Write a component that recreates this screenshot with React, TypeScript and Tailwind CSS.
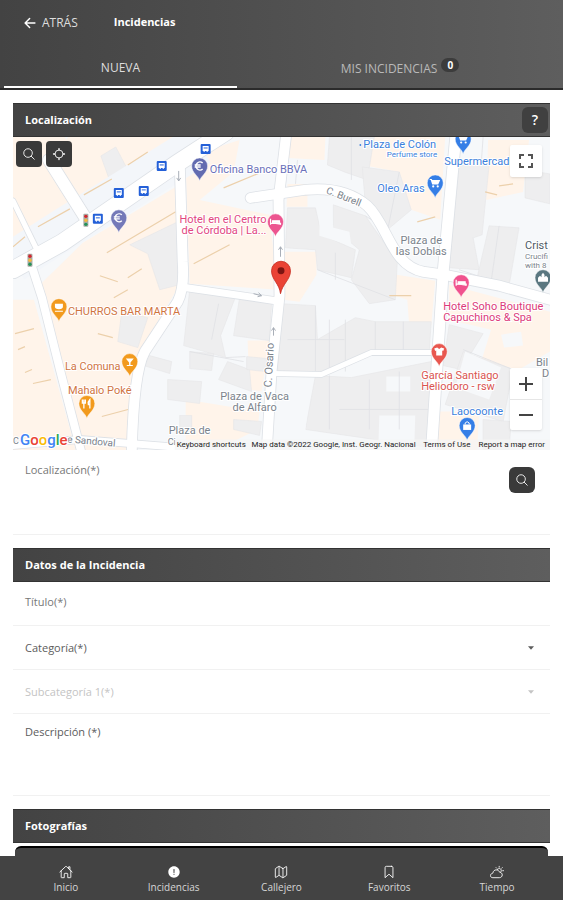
import type { ReactNode } from "react";
import {
  IoAlertCircle,
  IoArrowBack,
  IoBookmarkOutline,
  IoCaretDownSharp,
  IoHomeOutline,
  IoLocateOutline,
  IoMapOutline,
  IoPartlySunnyOutline,
  IoSearchOutline,
} from "react-icons/io5";

const navItems = [
  { label: "Inicio", icon: IoHomeOutline },
  { label: "Incidencias", icon: IoAlertCircle },
  { label: "Callejero", icon: IoMapOutline },
  { label: "Favoritos", icon: IoBookmarkOutline },
  { label: "Tiempo", icon: IoPartlySunnyOutline },
];

/* ---------- Map data ---------- */

// Commercial areas (beige)
const areas = [
  "13,137 65,137 92,187 83,214 38,227 13,240",
  "68,137 180,137 178,142 84,195 60,152",
  "83,243 176,187 180,285 140,352 128,451 82,451 52,340 40,285",
  "13,300 34,300 76,451 13,451",
  "186,165 215,148 240,140 234,172 200,200 270,215 278,290 190,284",
  "290,137 326,137 325,160 288,158",
  "288,184 308,184 308,207 287,207",
  "284,252 317,252 317,275 300,302 284,300",
  "363,137 446,137 441,220 412,210 400,172 363,165",
  "489,140 530,140 524,192 487,200",
  "378,272 436,281 432,326 410,326 408,300 378,290",
  "450,285 551,312 551,352 520,370 482,362 492,330 450,320",
  "248,341 270,341 262,392 250,390",
  "186,400 260,412 258,430 222,448 186,440",
  "440,412 480,412 478,451 438,451",
];

// Buildings (grey)
const buildings = [
  "101,156 116,147 128,170 110,181",
  "130,245 178,222 180,285 160,290 148,254",
  "122,312 148,318 138,348 118,342",
  "146,355 172,362 170,374 144,366",
  "190,290 236,297 221,336 226,358 184,346",
  "240,298 272,304 270,341 234,336",
  "190,352 214,354 212,371 190,369",
  "228,362 250,370 252,392 219,380",
  "168,380 202,382 200,404 168,400",
  "247,357 268,359 266,372 247,370",
  "234,420 262,422 260,436 234,430",
  "180,416 192,416 192,432 180,432",
  "330,137 375,137 368,180 345,172 328,165",
  "288,208 316,208 322,235 356,250 352,278 318,270 316,250 286,248",
  "334,205 366,216 398,262 396,300 370,304 352,280 360,250 334,228",
  "363,167 400,172 412,210 388,230 366,205",
  "460,165 490,165 483,235 474,238 480,270 450,268",
  "490,226 520,228 510,286 478,278",
  "526,170 551,174 551,204 526,198",
  "282,304 316,306 318,340 356,318 376,322 432,322 430,352 370,352 325,374 278,371",
  "316,376 352,378 432,362 430,448 306,430",
  "450,325 484,334 462,370 444,366",
  "464,352 514,370 504,422 446,405",
  "484,420 512,422 510,451 484,451",
];

// Courtyards cut into the buildings
const courtyards = [
  "320,212 332,212 334,228 350,232 352,246 320,236",
  "387,377 411,377 411,392 387,392",
  "380,416 416,416 415,448 379,448",
  "502,335 522,332 524,346 505,348",
  "466,352 502,368 490,400 456,388",
  "275,376 312,378 306,430 318,448 268,448",
];

// Thin plot outlines
const plotLines = [
  "M316,306V372 M330,320V372 M346,320V372 M376,322V352 M404,322V352 M288,340H345 M370,380V430",
  "M366,216L388,230 M400,172L388,232 M340,410H432 M484,137L482,165 M500,226L492,282",
  "M190,352L244,362 M246,357L226,358 M219,304L212,340 M352,137V180 M298,160L296,184",
  "M318,270L396,300 M336,253V280 M460,270L551,300 M464,350L514,370 M330,376V430 M400,372V430",
];

const plotAccents =
  "M84,195L112,179 M38,227L70,209 M128,165L148,152 M107,253L176,212 M224,188L260,173 M194,264L230,245 M100,276L118,282 M128,278L142,269 M114,298L128,290 M13,247L25,237 M15,334L34,329 M98,334L113,338 M33,384L51,380 M102,417L132,409 M25,373L32,370 M18,350L25,347 M418,222L436,217 M500,186L514,184 M486,192L498,195 M390,296H412";

const roads = [
  { d: "M49,160L88,222", w: 12 },
  { d: "M13,201L38,252", w: 5 },
  { d: "M13,270L62,243L178,163L226,132", w: 17 },
  { d: "M31,264L42,298L60,370L81,451", w: 8 },
  { d: "M180,162L183,262Q185,288 178,302L145,352Q134,372 132,451", w: 10 },
  { d: "M187,288L276,301", w: 7 },
  { d: "M251,198L305,190Q345,186 368,206C388,224 392,266 424,272L445,275L500,286L551,300", w: 10 },
  { d: "M287,132L279,200L280,296L272,372L267,455", w: 10 },
  { d: "M274,374L322,375L372,353H436", w: 5 },
  { d: "M457,132L444,272L432,455", w: 11 },
  { d: "M13,446L80,440L180,448", w: 7 },
];

const places = [
  { lines: ["Oficina Banco BBVA"], x: 210, y: 173, color: "#6a71ba" },
  { lines: ["Hotel en el Centro", "de Córdoba | La..."], x: 179, y: 223, color: "#e2467f", end: 267 },
  { lines: ["CHURROS BAR MARTA"], x: 68, y: 315, color: "#d0743f" },
  { lines: ["La Comuna"], x: 65, y: 370, color: "#d0743f" },
  { lines: ["Mahalo Poké"], x: 68, y: 394, color: "#d0743f" },
  { lines: ["Oleo Aras"], x: 378, y: 192, color: "#3d7fdc" },
  { lines: ["Plaza de Colón"], x: 364, y: 148, color: "#3d7fdc" },
  { lines: ["Supermercad"], x: 445, y: 165, color: "#3d7fdc" },
  { lines: ["Hotel Soho Boutique", "Capuchinos & Spa"], x: 444, y: 310, color: "#dc3b7a" },
  { lines: ["García Santiago", "Heliodoro - rsw"], x: 422, y: 379, color: "#d95450" },
  { lines: ["Laocoonte"], x: 452, y: 416, color: "#3d7fdc" },
];

const pins = [
  { x: 200, y: 181, color: "#626bb0", kind: "euro" },
  { x: 119, y: 233, color: "#7479b8", kind: "euro" },
  { x: 276, y: 237, color: "#ec5590", kind: "bed" },
  { x: 462, y: 298, color: "#f0528e", kind: "bed" },
  { x: 59, y: 322, color: "#f29a1d", kind: "cup" },
  { x: 130, y: 377, color: "#f29a1d", kind: "glass" },
  { x: 87, y: 419, color: "#f29a1d", kind: "fork" },
  { x: 436, y: 198, color: "#357ee6", kind: "cart" },
  { x: 464, y: 154, color: "#357ee6", kind: "cart" },
  { x: 440, y: 367, color: "#e8574f", kind: "shop" },
  { x: 468, y: 441, color: "#357ee6", kind: "bag" },
  { x: 544, y: 293, color: "#5a7780", kind: "church" },
];

const busStops = [
  [206, 149],
  [162, 166],
  [119, 193],
  [144, 191],
  [98, 219],
];

const pinGlyphs: Record<string, ReactNode> = {
  euro: <path d="M3,-18A4,4 0 1 0 3,-12M-5,-16H1M-5,-14H1" fill="none" stroke="#fff" strokeWidth="1.4" />,
  bed: <path d="M-5,-18V-12M-5,-13.500H5V-12M-3,-16H4V-14H-3Z" fill="#fff" stroke="#fff" strokeWidth="1.2" />,
  cup: <path d="M-4,-18H4V-15Q4,-12.500 0,-12.500T-4,-15ZM-4,-11H4V-10H-4Z" fill="#fff" />,
  glass: <path d="M-4,-18H4L0.700,-14V-11.500H3V-10.500H-3V-11.500H-0.700V-14Z" fill="#fff" />,
  fork: <path d="M-3,-19V-10M-4.500,-19V-15.500H-1.500V-19M3,-10V-19Q1,-17 1.500,-14H3" fill="none" stroke="#fff" strokeWidth="1.3" />,
  cart: (
    <g fill="#fff">
      <path d="M-5.500,-19H-3.500L-3,-18H5L3,-13.500H-3L-4.500,-17.800H-5.500Z" />
      <circle cx="-2" cy="-11.500" r="1.100" />
      <circle cx="2.500" cy="-11.500" r="1.100" />
    </g>
  ),
  shop: <path d="M-5,-18L-2,-19L0,-17.500L2,-19L5,-18L4,-15.500L3,-16V-11H-3V-16L-4,-15.500Z" fill="#fff" />,
  bag: (
    <g>
      <path d="M-4,-16H4V-10.500H-4Z" fill="#fff" />
      <path d="M-2,-16V-17.500Q0,-20 2,-17.500V-16" fill="none" stroke="#fff" />
    </g>
  ),
  church: <path d="M-5,-11V-15L-3,-17L-1.500,-15.500V-18L0,-20L1.500,-18V-15.500L3,-17L5,-15V-11Z" fill="#fff" />,
};

function MapDrawing() {
  return (
    <svg
      viewBox="13 137 538 314"
      preserveAspectRatio="xMidYMid slice"
      className="block aspect-[538/314] w-full bg-[#f6f8fa] font-['Roboto',sans-serif]"
      role="img"
    >
      {areas.map((points) => (
        <polygon key={points} points={points} fill="#fff4ea" />
      ))}
      {buildings.map((points) => (
        <polygon key={points} points={points} fill="#eeeeef" stroke="#e5e6e8" strokeWidth="0.6" />
      ))}
      {courtyards.map((points) => (
        <polygon key={points} points={points} fill="#f6f8fa" />
      ))}
      {plotLines.map((d) => (
        <path key={d} d={d} stroke="#dfe1e4" strokeWidth="0.8" fill="none" />
      ))}
      {/* Avenue verge */}
      <path d="M13,262L66,228L200,145" stroke="#f3f6fa" strokeWidth="42" fill="none" />
      <path d={plotAccents} stroke="#ecd0ab" strokeWidth="1.2" fill="none" />

      {roads.map(({ d, w }) => (
        <path key={d} d={d} stroke="#dde1e6" strokeWidth={w + 1.6} fill="none" strokeLinecap="round" />
      ))}
      {roads.map(({ d, w }) => (
        <path key={d} d={d} stroke="#ffffff" strokeWidth={w} fill="none" strokeLinecap="round" />
      ))}

      {/* One-way arrows */}
      <g stroke="#a9afb8" strokeWidth="1" fill="none">
        <path d="M179,171V181M177,178L179,181L181,178" />
        <path d="M281,257V247M279,250L281,247L283,250" />
        <path d="M274,336V328M272,331L274,328L276,331" />
        <path d="M254,294L262,296M259,293L262,296L258,297" />
      </g>

      {busStops.map(([x, y]) => (
        <g key={`${x}-${y}`}>
          <rect x={x - 5} y={y - 5} width="10" height="10" rx="1" fill="#2460d8" />
          <path d={`M${x - 3},${y - 3}h6v5h-1v1h-1v-1h-2v1h-1v-1h-1z`} fill="#fff" />
          <path d={`M${x - 2},${y - 1}h4`} stroke="#2460d8" />
        </g>
      ))}
      {[
        [86, 220],
        [30, 260],
      ].map(([x, y]) => (
        <g key={x}>
          <rect x={x - 2.5} y={y - 6} width="5" height="13" rx="1" fill="#a9aaa5" />
          <circle cx={x} cy={y - 3.5} r="1.7" fill="#d3262f" />
          <circle cx={x} cy={y + 0.5} r="1.7" fill="#f5b83d" />
          <circle cx={x} cy={y + 4.5} r="1.7" fill="#249259" />
        </g>
      ))}

      {/* Streets and squares */}
      <g fontSize="11" fill="#7b838c" stroke="#fff" strokeWidth="2" paintOrder="stroke">
        <text transform="translate(326,193) rotate(22)" fontSize="10">
          C. Burell
        </text>
        <text transform="translate(272,388) rotate(-87)">C. Osario</text>
        <g textAnchor="middle">
          <text x="422" y="244">Plaza de</text>
          <text x="422" y="255">las Doblas</text>
          <text x="255" y="401">Plaza de Vaca</text>
          <text x="255" y="412">de Alfaro</text>
        </g>
        <text x="169" y="435">Plaza de</text>
        <text x="168" y="446" fontSize="9">Ci</text>
        <text x="13" y="445" fontSize="9">C</text>
        <text transform="translate(67,443) rotate(5)" fontSize="10">
          e Sandoval
        </text>
        <text x="537" y="366">Bil</text>
        <text x="543" y="377">D</text>
        <text x="526" y="249" fill="#4f5965">Crist</text>
        <text x="526" y="259" fontSize="8">Crucifi</text>
        <text x="526" y="268" fontSize="8">with 8</text>
      </g>

      {pins.map(({ x, y, color, kind }) => (
        <g key={`${x}-${y}`} transform={`translate(${x},${y})`}>
          <path
            d="M0,0C-1,-5 -8,-8 -8,-15A8,8 0 0 1 8,-15C8,-8 1,-5 0,0Z"
            fill={color}
            stroke="#fff"
            strokeWidth="0.5"
          />
          {pinGlyphs[kind]}
        </g>
      ))}

      {places.map(({ lines, x, y, color, end }) => (
        <text
          key={lines[0]}
          fontSize="11"
          fill={color}
          stroke="#fff"
          strokeWidth="2"
          paintOrder="stroke"
          textAnchor={end ? "end" : "start"}
        >
          {lines.map((line, i) => (
            <tspan key={line} x={end ?? x} y={y + i * 11}>
              {line}
            </tspan>
          ))}
        </text>
      ))}
      <circle cx="361" cy="145" r="0.900" fill="#3d7fdc" />
      <text x="438" y="157" fontSize="8" textAnchor="end" fill="#3d7fdc" stroke="#fff" strokeWidth="2" paintOrder="stroke">
        Perfume store
      </text>

      {/* Selected location */}
      <path
        d="M281,294C280,284 272,280 272,271A9.500,9.500 0 0 1 291,271C291,280 283,284 281,294Z"
        fill="#ea4335"
        stroke="#c5281c"
        strokeWidth="0.8"
      />
      <circle cx="281.500" cy="271" r="3.500" fill="#7d1512" />

      <text x="20" y="446" fontSize="15" fontWeight="500" stroke="#fff" strokeWidth="2" paintOrder="stroke">
        <tspan fill="#4285f4">G</tspan>
        <tspan fill="#ea4335">o</tspan>
        <tspan fill="#fbbc05">o</tspan>
        <tspan fill="#4285f4">g</tspan>
        <tspan fill="#34a853">l</tspan>
        <tspan fill="#ea4335">e</tspan>
      </text>

      <rect x="175" y="440" width="376" height="11" fill="#f5f5f5" opacity="0.700" />
      <g fontSize="8" fill="#222">
        <text x="177" y="448">Keyboard shortcuts</text>
        <text x="252" y="448">Map data ©2022 Google, Inst. Geogr. Nacional</text>
        <text x="424" y="448">Terms of Use</text>
        <text x="546" y="448" textAnchor="end">
          Report a map error
        </text>
      </g>
    </svg>
  );
}

function SectionBar({ title, children }: { title: string; children?: ReactNode }) {
  return (
    <div className="flex h-[34px] items-center justify-between border-y border-[#333] bg-linear-to-r from-[#434343] to-[#5e5e5e] pr-0.5 pl-3">
      <h2 className="text-[11px] font-bold text-white">{title}</h2>
      {children}
    </div>
  );
}

function SelectRow({ id, label, disabled }: { id: string; label: string; disabled?: boolean }) {
  return (
    <div
      className={`flex h-11 items-center border-b border-[#f1f1f1] pr-[15px] pl-3 ${disabled ? "text-[#c4c4c4]" : "text-[#5c5c5c]"}`}
    >
      <label htmlFor={id}>{label}</label>
      <select id={id} disabled={disabled} className="h-full flex-1 appearance-none bg-transparent outline-none">
        <option value=""></option>
      </select>
      <IoCaretDownSharp className="size-2" />
    </div>
  );
}

export default function App() {
  return (
    <div className="flex h-screen flex-col bg-white font-['Open_Sans',sans-serif] text-[11px]">
      <header className="shrink-0 border-b-2 border-[#2b2b2b] bg-linear-to-r from-[#434343] to-[#5e5e5e] text-xs text-white">
        <div className="flex h-[45px] items-center gap-9 px-[22px]">
          <button type="button" className="flex items-center gap-1 text-[#dedede]">
            <IoArrowBack className="size-4 text-white" />
            ATRÁS
          </button>
          <h1 className="text-[11px] font-bold">Incidencias</h1>
        </div>
        <div role="tablist" className="grid h-[43px] grid-cols-[5fr_7fr] pl-1">
          <button type="button" role="tab" aria-selected="true" className="border-b-2 border-white pt-1 text-[#dedede]">
            NUEVA
          </button>
          <button
            type="button"
            role="tab"
            aria-selected="false"
            className="flex items-center justify-center gap-1 pt-1 text-[#b9b9b9]"
          >
            MIS INCIDENCIAS
            <span className="mb-2 rounded-full bg-[#3c3c3c] px-1.5 text-[10px] leading-[14px] font-bold text-white">0</span>
          </button>
        </div>
      </header>

      <main className="min-h-0 flex-1 overflow-y-auto px-[13px] pt-[13px] [scrollbar-width:none]">
        <SectionBar title="Localización">
          <button type="button" className="size-[26px] rounded-md bg-[#404040] text-sm font-semibold text-white">
            ?
          </button>
        </SectionBar>

        <div className="relative">
          <MapDrawing />
          <div className="absolute top-1 left-[3px] flex gap-1">
            <button
              type="button"
              aria-label="Buscar"
              className="grid size-[26px] place-items-center rounded-sm bg-[#3a3a3a] text-white"
            >
              <IoSearchOutline className="size-[14px]" />
            </button>
            <button
              type="button"
              aria-label="Ubicación"
              className="grid size-[26px] place-items-center rounded-sm bg-[#3a3a3a] text-white"
            >
              <IoLocateOutline className="size-[14px]" />
            </button>
          </div>
          <button
            type="button"
            aria-label="Pantalla completa"
            className="absolute top-2 right-2 grid size-8 place-items-center rounded-xs bg-white shadow"
          >
            <svg viewBox="0 0 14 14" className="size-[14px]" fill="none" stroke="#555" strokeWidth="2">
              <path d="M1,5V1H5M9,1H13V5M13,9V13H9M5,13H1V9" />
            </svg>
          </button>
          <div className="absolute right-2 bottom-5 flex w-8 flex-col divide-y divide-[#e6e6e6] rounded-xs bg-white shadow">
            <button type="button" aria-label="Acercar" className="grid h-8 place-items-center">
              <svg viewBox="0 0 14 14" className="size-[14px]" stroke="#444" strokeWidth="2">
                <path d="M7,0V14M0,7H14" />
              </svg>
            </button>
            <button type="button" aria-label="Alejar" className="grid h-[30px] place-items-center">
              <svg viewBox="0 0 14 14" className="size-[14px]" stroke="#444" strokeWidth="2">
                <path d="M0,7H14" />
              </svg>
            </button>
          </div>
        </div>

        <form>
          <div className="flex h-[85px] border-b border-[#f1f1f1] pr-[15px] pl-3 text-[#777]">
            <label htmlFor="localizacion" className="pt-3">
              Localización(*)
            </label>
            <textarea id="localizacion" className="flex-1 resize-none bg-transparent pt-3 outline-none" />
            <button
              type="button"
              aria-label="Buscar dirección"
              className="mt-[17px] grid size-[26px] place-items-center rounded-md bg-[#3a3a3a] text-white"
            >
              <IoSearchOutline className="size-[14px]" />
            </button>
          </div>

          <div className="pt-[13px]">
            <SectionBar title="Datos de la Incidencia" />
            <div className="flex h-11 items-center border-b border-[#f1f1f1] px-3 pb-1 text-[#777]">
              <label htmlFor="titulo">Título(*)</label>
              <input id="titulo" type="text" className="h-full flex-1 outline-none" />
            </div>
            <SelectRow id="categoria" label="Categoría(*)" />
            <SelectRow id="subcategoria" label="Subcategoría 1(*)" disabled />
            <div className="flex h-[82px] border-b border-[#f1f1f1] px-3 text-[#5c5c5c]">
              <label htmlFor="descripcion" className="pt-2.5">
                Descripción (*)
              </label>
              <textarea id="descripcion" className="flex-1 resize-none bg-transparent pt-2.5 outline-none" />
            </div>
          </div>

          <div className="pt-[13px]">
            <SectionBar title="Fotografías" />
            <button
              type="button"
              aria-label="Añadir fotografía"
              className="mx-auto mt-[3px] block h-10 w-[calc(100%-4px)] rounded-md border-t-2 border-black bg-[#434343]"
            />
          </div>
        </form>
      </main>

      <nav className="flex h-11 shrink-0 bg-[#434343] px-3 text-[10px] leading-[14px] text-[#d6d6d6]">
        {navItems.map(({ label, icon: Icon }) => (
          <a key={label} href="#" className="flex flex-1 flex-col items-center justify-center gap-px pt-0.5">
            <Icon className="size-[14px] text-white" />
            {label}
          </a>
        ))}
      </nav>
    </div>
  );
}
